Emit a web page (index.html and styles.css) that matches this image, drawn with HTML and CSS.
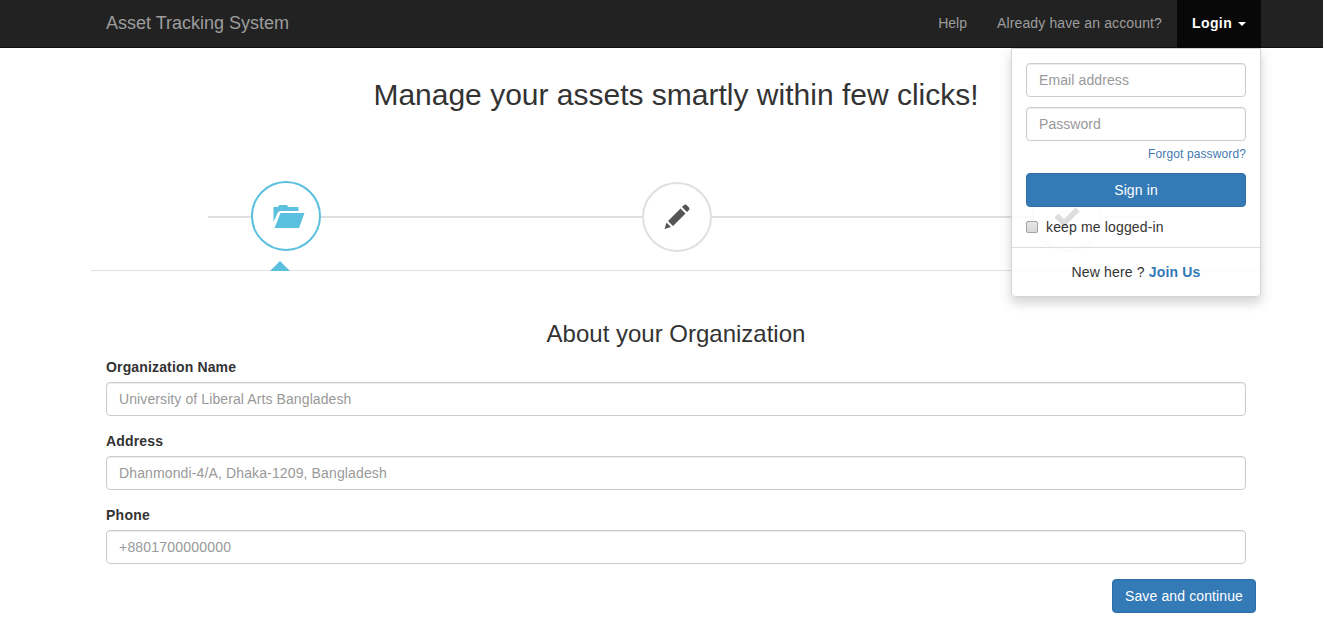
FILE: index.html
```html
<!DOCTYPE html>
<html lang="en">
<head>
<meta charset="utf-8">
<title>Asset Tracking System</title>
<link rel="stylesheet" href="styles.css">
</head>
<body>
<nav class="navbar">
  <div class="container navbar-inner">
    <a class="brand"><span>Asset Tracking System</span></a>
    <div class="nav-links">
      <a class="nav-link"><span class="t-help">Help</span></a>
      <span class="nav-link"><span class="t-already">Already have an account?</span></span>
      <div class="dropdown">
        <a class="nav-link active"><b class="t-login">Login</b><i class="caret"></i></a>
        <div class="login-menu">
          <form class="login-form">
            <input class="field t-email" type="text" placeholder="Email address">
            <input class="field t-pass" type="password" placeholder="Password">
            <a class="forgot">Forgot password?</a>
            <button class="btn btn-block" type="button">Sign in</button>
            <label class="remember"><i class="checkbox"></i><span>keep me logged-in</span></label>
          </form>
          <div class="join"><span>New here ? <b>Join Us</b></span></div>
        </div>
      </div>
    </div>
  </div>
</nav>
<main class="container">
  <h2 class="title"><span>Manage your assets smartly within few clicks!</span></h2>
  <div class="wizard">
    <div class="step current">
      <span class="round"><svg width="36" height="28" viewBox="0 0 36 28"><path fill="#5bc0de" d="M2.500 20V5h4.500q.5-2 2-2h6q2 0 2 2h10.500v4H9.500q-2 0-3 2zM9.500 11h24l-5.500 15H3.500z"/></svg></span>
    </div>
    <div class="step">
      <span class="round"><svg width="30" height="30" viewBox="0 0 30 30"><path fill="#555" d="M2.500 27l2-6.500 4.500 4.500zM6 19L18.500 6.500l5 5L11 24zM20 5l2-2q1.500-1 3 .5l2 2q1 1.500 0 2.500l-2 2z"/></svg></span>
    </div>
    <div class="step">
      <span class="round"><svg width="30" height="26" viewBox="0 0 30 26"><path fill="#222" d="M2.500 13.500l4-4 5.500 5.500L23.500 3.500l4 4L12 23z"/></svg></span>
    </div>
  </div>
  <form class="org-form">
    <h3 class="subtitle"><span>About your Organization</span></h3>
    <div class="group"><label class="t-org">Organization Name</label><input class="field t-univ" placeholder="University of Liberal Arts Bangladesh"></div>
    <div class="group"><label class="t-addr">Address</label><input class="field t-dhan" placeholder="Dhanmondi-4/A, Dhaka-1209, Bangladesh"></div>
    <div class="group"><label class="t-phone">Phone</label><input class="field t-num" placeholder="+8801700000000"></div>
    <div class="actions"><button class="btn btn-save" type="button">Save and continue</button></div>
  </form>
</main>
</body>
</html>
```
FILE: styles.css
```css
* { box-sizing: border-box; }
body {
  margin: 0;
  font: 14px/20px "Liberation Sans", Arial, sans-serif;
  color: #333;
  background: #fff;
}
.container { width: 1170px; margin-left: 91px; }
.navbar { height: 48px; background: #222; border-bottom: 1px solid #101010; }
.navbar-inner { display: flex; justify-content: space-between; height: 48px; }
.brand { padding: 13px 15px; font-size: 18px; color: #9d9d9d; white-space: nowrap; }
.nav-links { display: flex; }
.nav-link { display: flex; align-items: center; height: 48px; padding: 0 15px 2px; color: #9d9d9d; white-space: nowrap; }
.nav-link.active { width: 84px; background: #080808; color: #fff; }
.t-already { letter-spacing: .13px; }
.t-login { letter-spacing: .4px; }
.caret { margin-left: 6px; margin-top: 2px; border: 4px solid transparent; border-top-color: #fff; border-bottom: 0; }
.dropdown { position: relative; }
.login-menu {
  position: absolute;
  z-index: 10;
  top: 48px;
  right: 0;
  width: 250px;
  height: 249px;
  background: rgba(255, 255, 255, .85);
  background-clip: padding-box;
  border: 1px solid #d4d4d4;
  border-radius: 0 0 4px 4px;
  box-shadow: 0 6px 12px rgba(0, 0, 0, .175);
}
.login-form { display: flex; flex-direction: column; height: 199px; padding: 14px; border-bottom: 1px solid #ddd; }
.login-form .field { margin-bottom: 10px; }
.login-form .t-pass { margin-bottom: 3px; }
.t-email { letter-spacing: .1px; }
.t-pass { letter-spacing: .05px; }
.forgot { align-self: flex-end; font-size: 12px; letter-spacing: .12px; color: #4479b0; white-space: nowrap; }
.field {
  display: block;
  flex: none;
  width: 100%;
  height: 34px;
  padding: 6px 12px;
  font: inherit;
  color: #555;
  background: #fff;
  border: 1px solid #ccc;
  border-radius: 4px;
  box-shadow: inset 0 1px 1px rgba(0, 0, 0, .075);
}
.field::placeholder { color: #999; opacity: 1; }
.btn {
  height: 34px;
  padding: 0 12px;
  font: inherit;
  letter-spacing: .12px;
  color: #fff;
  background: #337ab7;
  border: 1px solid #2e6da4;
  border-radius: 4px;
  white-space: nowrap;
}
.btn-block { flex: none; width: 100%; margin-top: 9px; }
.remember { display: flex; align-items: center; margin-top: 10px; letter-spacing: .15px; white-space: nowrap; }
.checkbox { width: 12px; height: 12px; margin-right: 8px; border: 1px solid #a3a3a3; border-radius: 2px; background: linear-gradient(#e6e6e6, #d8d8d8); }
.join { padding: 14px 0; letter-spacing: .15px; text-align: center; white-space: nowrap; }
.join b { color: #337ab7; }
.title { margin: 0; padding: 30px 0 0; font-size: 30px; line-height: 33px; font-weight: 400; text-align: center; white-space: nowrap; }
.wizard {
  display: grid;
  grid-template-columns: repeat(3, 390px);
  height: 101px;
  margin-top: 59px;
  border-bottom: 1px solid #e0e0e0;
  background: linear-gradient(#e0e0e0, #e0e0e0) 117px 46px / 936px 2px no-repeat;
}
.step { display: flex; flex-direction: column; align-items: center; padding: 12px 0 0 1px; }
.round { display: flex; align-items: center; justify-content: center; width: 70px; height: 70px; background: #fff; border: 2px solid #e0e0e0; border-radius: 50%; }
.step.current { padding: 11px 0 0; }
.current .round { border-color: #5bc0de; }
.current .round svg { margin-left: 5px; }
.current::after { content: ""; margin: 10px 12px 0 0; border: 10px solid transparent; border-top: 0; border-bottom-color: #5bc0de; }
.org-form { padding: 50px 15px 0; }
.subtitle { margin: 0 0 10px; font-size: 24px; line-height: 26px; font-weight: 400; text-align: center; white-space: nowrap; }
.group { margin-bottom: 15px; }
.group label { display: table; margin-bottom: 5px; font-weight: 700; letter-spacing: .15px; white-space: nowrap; }
.group .t-phone { letter-spacing: .25px; }
.t-univ { letter-spacing: .1px; }
.t-dhan { letter-spacing: .13px; }
.t-num { letter-spacing: .2px; }
.actions { display: flex; justify-content: flex-end; margin-right: -10px; }
.btn-save { width: 144px; }
```
